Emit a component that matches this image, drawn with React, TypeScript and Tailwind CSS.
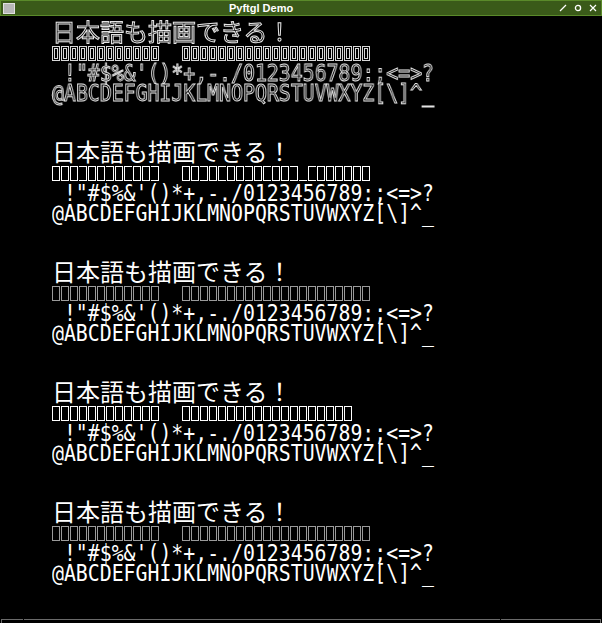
const JP = '日本語も描画できる！'
const SYM = ' !"#$%&\'()*+,-./0123456789:;<=>?'
const ALPHA = '@ABCDEFGHIJKLMNOPQRSTUVWXYZ[\\]^_'

// shapes for the "missing glyph" row of block 2: f = full box, r = open left, l = open right, u = underscore
const MIXED_A = 'ffrffrflffr'
const MIXED_B = 'ffrflffrflffrulfff'

type Variant = 'outline' | 'bitmap' | 'smooth'

function Tofu({ variant, shape = 'f' }: { variant: Variant; shape?: string }) {
  if (variant === 'outline') {
    return <span className="inline-block w-[8px] h-[15px] mr-[1px] border-[3px] border-double border-[#d8d8d8]" />
  }
  const color = variant === 'smooth' ? 'border-[#9a9a9a]' : 'border-white'
  if (shape === 'u') {
    return <span className={`inline-block w-[8px] h-[15px] mr-[1px] border-b ${color}`} />
  }
  if (shape === 'r') {
    return <span className={`inline-block w-[8px] h-[15px] mr-[1px] border-t border-r border-b ${color}`} />
  }
  if (shape === 'l') {
    return <span className={`inline-block w-[8px] h-[15px] mr-[1px] border-t border-l border-b ${color}`} />
  }
  return <span className={`inline-block w-[8px] h-[15px] mr-[1px] border ${color}`} />
}

function TofuRow({ variant, first, second }: { variant: Variant; first: string; second: string }) {
  return (
    <div className="h-[20px] flex items-center">
      <div className="flex">
        {first.split('').map((s, i) => (
          <Tofu key={i} variant={variant} shape={s} />
        ))}
      </div>
      <div className="w-[22px]" />
      <div className="flex">
        {second.split('').map((s, i) => (
          <Tofu key={i} variant={variant} shape={s} />
        ))}
      </div>
    </div>
  )
}

function Block({ variant, first, second }: { variant: Variant; first: string; second: string }) {
  const textStyle =
    variant === 'outline'
      ? 'text-black [-webkit-text-stroke:1px_#e4e4e4] will-change-transform'
      : 'text-white'

  return (
    <div className="h-[120px]">
      <div
        className={`h-[24px] leading-[24px] text-[24px] whitespace-pre ${textStyle}`}
        style={{ fontFamily: '"Noto Sans CJK JP", sans-serif' }}
      >
        {JP}
      </div>
      <TofuRow variant={variant} first={first} second={second} />
      <div
        className={`h-[20px] leading-[20px] text-[23px] whitespace-pre origin-left scale-x-[0.862] ${textStyle}`}
        style={{ fontFamily: '"DejaVu Sans Mono", monospace' }}
      >
        {SYM}
      </div>
      <div
        className={`h-[20px] leading-[20px] text-[23px] whitespace-pre origin-left scale-x-[0.862] ${textStyle}`}
        style={{ fontFamily: '"DejaVu Sans Mono", monospace' }}
      >
        {ALPHA}
      </div>
    </div>
  )
}

export default function App() {
  const full12 = 'ffffffffffff'
  const full20 = 'fffffffffffffffffffff'

  return (
    <div className="w-[602px] h-[623px] flex flex-col bg-black overflow-hidden">
      {/* title bar */}
      <div className="h-[18px] bg-[#3a5a19] border border-[#5a8a2a] flex items-center">
        <div className="ml-[2px] w-[12px] h-[11px] bg-[#b8b8b8] border border-[#e0e0e0]" />
        <div
          className="pl-[214px] text-[11px] font-bold text-white leading-none"
          style={{ fontFamily: '"Liberation Sans", sans-serif' }}
        >
          Pyftgl Demo
        </div>
        <div className="ml-auto mr-[4px] flex items-center gap-[7px]">
          <svg width="8" height="8" viewBox="0 0 8 8">
            <path d="M1 7 L7 1" stroke="white" strokeWidth="1.2" />
          </svg>
          <svg width="8" height="8" viewBox="0 0 8 8">
            <circle cx="4" cy="4" r="2.6" stroke="white" strokeWidth="1.3" fill="none" />
          </svg>
          <svg width="8" height="8" viewBox="0 0 8 8">
            <path d="M1 1 L7 7 M7 1 L1 7" stroke="white" strokeWidth="1.2" />
          </svg>
        </div>
      </div>

      {/* drawing area */}
      <div className="flex-1 pl-[52px] pt-[3px]">
        <Block variant="outline" first={full12} second={full20} />
        <Block variant="bitmap" first={'f' + MIXED_A} second={MIXED_B + 'fff'} />
        <Block variant="smooth" first={full12} second={full20} />
        <Block variant="bitmap" first={full12} second={'fffffffffffffffffff'} />
        <Block variant="smooth" first={full12} second={full20} />
      </div>

      {/* bottom frame */}
      <div className="h-[4px] flex px-[1px]">
        <div className="w-[22px] border-t border-l border-[#6a6a6a]" />
        <div className="w-[1px]" />
        <div className="flex-1 border-t border-[#6a6a6a]" />
        <div className="w-[1px]" />
        <div className="w-[100px] border-t border-r border-[#6a6a6a]" />
      </div>
    </div>
  )
}
